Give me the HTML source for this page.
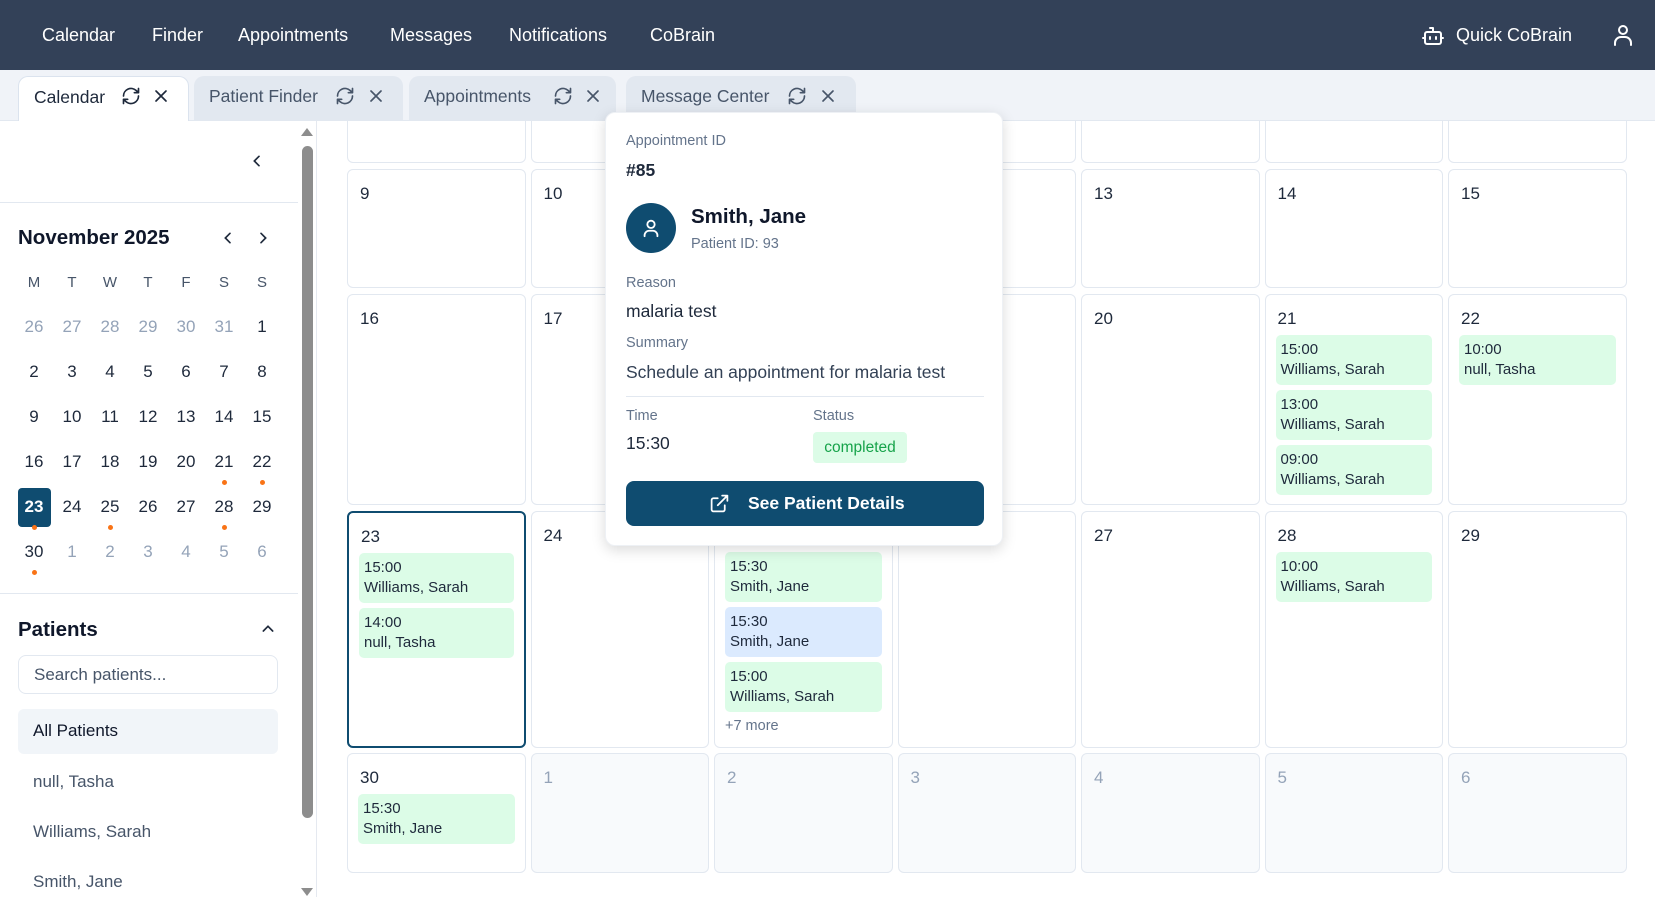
<!DOCTYPE html>
<html><head><meta charset="utf-8"><style>
*{box-sizing:border-box;margin:0;padding:0}
body{width:1655px;height:897px;overflow:hidden;background:#fff;font-family:"Liberation Sans",sans-serif;color:#1e293b;position:relative}
.abs{position:absolute}
.nav{left:0;top:0;width:1655px;height:70px;background:#334158}
.nav span{position:absolute;top:25px;color:#fff;font-size:18px}
.tabs{left:0;top:70px;width:1655px;height:51px;background:#f0f3f8;border-bottom:1px solid #e2e8f0}
.tab{position:absolute;top:6px;height:45px;background:#e2e8f0;border-radius:10px 10px 0 0;font-size:17.5px;color:#475569;padding:10px 0 0 15px}
.tab.act{background:#fff;color:#1e293b;border:1px solid #dbe3ee;border-bottom:none}
.side{left:0;top:121px;width:317px;height:776px;background:#fff;border-right:1px solid #e5e9f0}
.sb{left:302px;top:146px;width:11px;height:672px;background:#8d8d8d;border-radius:6px}
.cd{position:absolute;width:38px;text-align:center;font-size:17px}
.dot{position:absolute;width:5px;height:5px;border-radius:50%;background:#f97316}
.cell{position:absolute;border:1px solid #e2e8f0;border-radius:6px;background:#fff}
.cell.o{background:#f8fafc}
.num{position:absolute;left:12px;top:14px;font-size:17px;color:#1e293b}
.o .num{color:#94a3b8}
.ev{position:absolute;left:10px;right:10px;height:50px;background:#dcfce7;border-radius:5px;font-size:15px;line-height:20px;padding:5px 5px;color:#1e293b}
.ev.b{background:#dbeafe}
.pop{left:605px;top:112px;width:398px;height:434px;background:#fff;border-radius:10px;box-shadow:0 4px 14px rgba(0,0,0,.15);border:1px solid #eef1f5}
.lbl{position:absolute;left:20px;font-size:14.5px;color:#64748b}
.val{position:absolute;left:20px;font-size:17.5px;color:#1e293b}
</style></head><body>
<div class="abs nav">
<span style="left:42px">Calendar</span><span style="left:152px">Finder</span><span style="left:238px">Appointments</span><span style="left:390px">Messages</span><span style="left:509px">Notifications</span><span style="left:650px">CoBrain</span>
<svg class="abs" style="left:1421px;top:24px" width="24" height="24" viewBox="0 0 24 24" fill="none" stroke="#fff" stroke-width="2" stroke-linecap="round" stroke-linejoin="round"><rect x="4" y="8" width="16" height="12" rx="2"/><path d="M12 8V4H9M2 14h2M20 14h2M9 13v2M15 13v2"/></svg>
<span style="left:1456px">Quick CoBrain</span>
<svg class="abs" style="left:1611px;top:23px" width="24" height="24" viewBox="0 0 24 24" fill="none" stroke="#fff" stroke-width="2" stroke-linecap="round"><circle cx="12" cy="7" r="4"/><path d="M4 22v-2a6 6 0 0 1 6-6h4a6 6 0 0 1 6 6v2"/></svg>
</div>
<div class="abs tabs">
<div class="tab act" style="left:18px;width:171px">Calendar</div>
<div class="tab" style="left:194px;width:209px">Patient Finder</div>
<div class="tab" style="left:409px;width:207px">Appointments</div>
<div class="tab" style="left:626px;width:230px">Message Center</div>
</div>
<svg width="0" height="0" style="position:absolute"><defs>
<symbol id="rf" viewBox="0 0 24 24"><path d="M3 12a9 9 0 0 1 15-6.7L21 8M21 3v5h-5M21 12a9 9 0 0 1-15 6.7L3 16M3 21v-5h5" fill="none" stroke="currentColor" stroke-width="2" stroke-linecap="round" stroke-linejoin="round"/></symbol>
<symbol id="xx" viewBox="0 0 24 24"><path d="M6 6l12 12M18 6L6 18" fill="none" stroke="currentColor" stroke-width="2" stroke-linecap="round"/></symbol>
</defs></svg>
<svg class="abs" style="left:121px;top:86px;color:#1e293b" width="20" height="20"><use href="#rf"/></svg>
<svg class="abs" style="left:151px;top:86px;color:#1e293b" width="20" height="20"><use href="#xx"/></svg>
<svg class="abs" style="left:335px;top:86px;color:#475569" width="20" height="20"><use href="#rf"/></svg>
<svg class="abs" style="left:366px;top:86px;color:#475569" width="20" height="20"><use href="#xx"/></svg>
<svg class="abs" style="left:553px;top:86px;color:#475569" width="20" height="20"><use href="#rf"/></svg>
<svg class="abs" style="left:583px;top:86px;color:#475569" width="20" height="20"><use href="#xx"/></svg>
<svg class="abs" style="left:787px;top:86px;color:#475569" width="20" height="20"><use href="#rf"/></svg>
<svg class="abs" style="left:818px;top:86px;color:#475569" width="20" height="20"><use href="#xx"/></svg>

<div class="abs side"></div>
<div class="abs" style="left:301px;top:128px;width:0;height:0;border-left:6px solid transparent;border-right:6px solid transparent;border-bottom:8px solid #8d8d8d"></div>
<div class="abs sb"></div>
<div class="abs" style="left:301px;top:888px;width:0;height:0;border-left:6px solid transparent;border-right:6px solid transparent;border-top:8px solid #8d8d8d"></div>
<svg class="abs" style="left:249px;top:153px" width="16" height="16" viewBox="0 0 24 24" fill="none" stroke="#1e293b" stroke-width="2.5" stroke-linecap="round"><path d="M15 5l-7 7 7 7"/></svg>
<div class="abs" style="left:0;top:202px;width:298px;height:1px;background:#e2e8f0"></div>
<div class="abs" style="left:18px;top:226px;font-size:20.5px;font-weight:600;color:#0f172a">November 2025</div>
<svg class="abs" style="left:220px;top:230px" width="16" height="16" viewBox="0 0 24 24" fill="none" stroke="#1e293b" stroke-width="2.5" stroke-linecap="round"><path d="M15 5l-7 7 7 7"/></svg>
<svg class="abs" style="left:255px;top:230px" width="16" height="16" viewBox="0 0 24 24" fill="none" stroke="#1e293b" stroke-width="2.5" stroke-linecap="round"><path d="M9 5l7 7-7 7"/></svg>
<div id="mini"></div>
<div class="abs" style="left:0;top:593px;width:298px;height:1px;background:#e2e8f0"></div>
<div class="abs" style="left:18px;top:618px;font-size:20.5px;font-weight:600;color:#0f172a">Patients</div>
<svg class="abs" style="left:260px;top:621px" width="16" height="16" viewBox="0 0 24 24" fill="none" stroke="#1e293b" stroke-width="2.5" stroke-linecap="round"><path d="M5 15l7-7 7 7"/></svg>
<div class="abs" style="left:18px;top:655px;width:260px;height:39px;border:1px solid #e2e8f0;border-radius:8px;font-size:17px;color:#475569;padding:9px 15px">Search patients...</div>
<div class="abs" style="left:18px;top:709px;width:260px;height:45px;background:#f1f5f9;border-radius:6px;font-size:17px;color:#0f172a;padding:12px 15px">All Patients</div>
<div class="abs" style="left:33px;top:772px;font-size:17px;color:#475569">null, Tasha</div>
<div class="abs" style="left:33px;top:822px;font-size:17px;color:#475569">Williams, Sarah</div>
<div class="abs" style="left:33px;top:872px;font-size:17px;color:#475569">Smith, Jane</div>

<div id="grid"></div>

<div class="abs pop">
<div class="lbl" style="top:20px">Appointment ID</div>
<div class="val" style="top:47px;font-weight:600">#85</div>
<div class="abs" style="left:20px;top:90px;width:50px;height:50px;border-radius:50%;background:#0f4c70"></div>
<svg class="abs" style="left:34px;top:104px" width="22" height="22" viewBox="0 0 24 24" fill="none" stroke="#fff" stroke-width="2" stroke-linecap="round"><circle cx="12" cy="8" r="4"/><path d="M5 21v-1a5 5 0 0 1 5-5h4a5 5 0 0 1 5 5v1"/></svg>
<div class="abs" style="left:85px;top:92px;font-size:20.5px;font-weight:600;color:#0f172a">Smith, Jane</div>
<div class="abs" style="left:85px;top:123px;font-size:14.5px;color:#64748b">Patient ID: 93</div>
<div class="lbl" style="top:162px">Reason</div>
<div class="val" style="top:188px">malaria test</div>
<div class="lbl" style="top:222px">Summary</div>
<div class="val" style="top:249px;color:#334155">Schedule an appointment for malaria test</div>
<div class="abs" style="left:20px;top:283px;width:358px;height:1px;background:#e2e8f0"></div>
<div class="lbl" style="top:295px">Time</div>
<div class="lbl" style="top:295px;left:207px">Status</div>
<div class="val" style="top:320px">15:30</div>
<div class="abs" style="left:207px;top:319px;width:94px;height:31px;background:#dcfce7;border-radius:4px;color:#16a34a;font-size:15.5px;text-align:center;line-height:31px">completed</div>
<div class="abs" style="left:20px;top:368px;width:358px;height:45px;background:#0f4c70;border-radius:8px;color:#fff;font-size:17.5px;font-weight:600;line-height:45px;padding-left:122px">See Patient Details</div>
<svg class="abs" style="left:103px;top:380px" width="21" height="21" viewBox="0 0 24 24" fill="none" stroke="#fff" stroke-width="2" stroke-linecap="round" stroke-linejoin="round"><path d="M18 14v5a2 2 0 0 1-2 2H5a2 2 0 0 1-2-2V8a2 2 0 0 1 2-2h5M15 3h6v6M10 14L21 3"/></svg>
</div>

<script>
var m=document.getElementById('mini'),h='';
var xs=[34,72,110,148,186,224,262];
['M','T','W','T','F','S','S'].forEach(function(d,i){h+='<div class="cd" style="left:'+(xs[i]-19)+'px;top:274px;font-size:15px;color:#475569">'+d+'</div>';});
var rows=[[26,27,28,29,30,31,1],[2,3,4,5,6,7,8],[9,10,11,12,13,14,15],[16,17,18,19,20,21,22],[23,24,25,26,27,28,29],[30,1,2,3,4,5,6]];
var ys=[317,362,407,452,497,542];
var dots={'3-5':1,'3-6':1,'4-0':1,'4-2':1,'4-5':1,'5-0':1};
rows.forEach(function(r,ri){r.forEach(function(d,i){
 var out=(ri==0&&i<6)||(ri==5&&i>0);
 if(ri==4&&i==0){h+='<div class="abs" style="left:18px;top:488px;width:33px;height:39px;background:#0f4c70;border-radius:4px"></div>';}
 var c=out?'#94a3b8':(ri==4&&i==0?'#fff;font-weight:700':'#1e293b');
 h+='<div class="cd" style="left:'+(xs[i]-19)+'px;top:'+ys[ri]+'px;color:'+c+'">'+d+'</div>';
 if(dots[ri+'-'+i])h+='<div class="dot" style="left:'+(xs[i]-2)+'px;top:'+(ys[ri]+28)+'px"></div>';
});});
m.innerHTML=h;
var g='',cx=[],L=347,W=178.5;for(var i=0;i<7;i++)cx.push(L+i*(W+5));
var ry=[[100,163],[169,288],[294,505],[511,748],[753,873]];
var nums=[[2,3,4,5,6,7,8],[9,10,11,12,13,14,15],[16,17,18,19,20,21,22],[23,24,25,26,27,28,29],[30,1,2,3,4,5,6]];
var ev={'2-5':[['15:00','Williams, Sarah'],['13:00','Williams, Sarah'],['09:00','Williams, Sarah']],'2-6':[['10:00','null, Tasha']],
'3-0':[['15:00','Williams, Sarah'],['14:00','null, Tasha']],'3-2':[['15:30','Smith, Jane'],['15:30','Smith, Jane',1],['15:00','Williams, Sarah']],'3-5':[['10:00','Williams, Sarah']],'4-0':[['15:30','Smith, Jane']]};
ry.forEach(function(r,ri){for(var i=0;i<7;i++){
 var o=(ri==4&&i>0),sel=(ri==3&&i==0);
 var st='left:'+cx[i]+'px;top:'+r[0]+'px;width:'+W+'px;height:'+(r[1]-r[0])+'px;';
 if(sel)st+='border:2.5px solid #0f4c70;';
 g+='<div class="cell'+(o?' o':'')+'" style="'+st+'">';
 if(ri>0)g+='<div class="num">'+nums[ri][i]+'</div>';
 var e=ev[ri+'-'+i];if(e){e.forEach(function(x,k){g+='<div class="ev'+(x[2]?' b':'')+'" style="top:'+(40+k*55)+'px">'+x[0]+'<br>'+x[1]+'</div>';});
  if(ri==3&&i==2)g+='<div class="abs" style="left:10px;top:206px;font-size:14.5px;color:#64748b">+7 more</div>';}
 g+='</div>';
}});
g='<div class="abs" style="left:318px;top:121px;width:1337px;height:776px;overflow:hidden"><div style="position:absolute;left:-318px;top:-121px;width:1655px;height:897px">'+g+'</div></div>';
document.getElementById('grid').outerHTML=g;
document.body.appendChild(document.querySelector('.pop'));
</script>
</body></html>
